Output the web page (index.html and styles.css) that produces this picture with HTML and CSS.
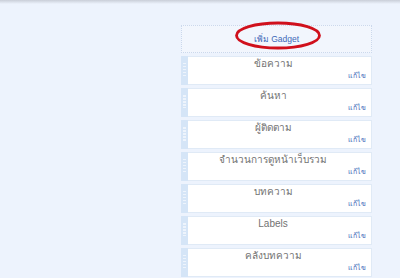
FILE: index.html
```html
<!DOCTYPE html>
<html lang="th">
<head>
  <meta charset="UTF-8" />
  <title>Layout</title>
  <link rel="stylesheet" href="styles.css">
</head>
<body>
  <div class="topbar"></div>

  <div class="column">
    <div class="add-gadget">
      <a href="#">เพิ่ม Gadget</a>
      <svg class="mark" width="92" height="30" viewBox="0 0 92 30">
        <ellipse cx="46" cy="14.5" rx="41.5" ry="12.5" fill="none" stroke="#d0101c" stroke-width="2.8"/>
      </svg>
    </div>

    <div class="widget"><div class="handle"></div><div class="box"><div class="title">ข้อความ</div><a class="edit" href="#">แก้ไข</a></div></div>
    <div class="widget"><div class="handle"></div><div class="box"><div class="title">ค้นหา</div><a class="edit" href="#">แก้ไข</a></div></div>
    <div class="widget"><div class="handle"></div><div class="box"><div class="title">ผู้ติดตาม</div><a class="edit" href="#">แก้ไข</a></div></div>
    <div class="widget"><div class="handle"></div><div class="box"><div class="title">จำนวนการดูหน้าเว็บรวม</div><a class="edit" href="#">แก้ไข</a></div></div>
    <div class="widget"><div class="handle"></div><div class="box"><div class="title">บทความ</div><a class="edit" href="#">แก้ไข</a></div></div>
    <div class="widget"><div class="handle"></div><div class="box"><div class="title">Labels</div><a class="edit" href="#">แก้ไข</a></div></div>
    <div class="widget"><div class="handle"></div><div class="box"><div class="title">คลังบทความ</div><a class="edit" href="#">แก้ไข</a></div></div>
  </div>
</body>
</html>
```

FILE: styles.css
```css
body {
  margin: 0;
  background: #edf3fd;
  font-family: 'Liberation Sans', 'DejaVu Sans', sans-serif;
  overflow: hidden;
}

.topbar {
  height: 4px;
  background: linear-gradient(#c9ced8, #edf3fd);
}

.column {
  margin: 21px 0 0 181px;
  width: 191px;
}

.add-gadget {
  position: relative;
  height: 26px;
  border: 1px dotted #cbd8ec;
  background: #f2f6fd;
  display: flex;
  align-items: center;
  justify-content: center;
}

.add-gadget a {
  font-size: 8.5px;
  color: #3d68b8;
  text-decoration: none;
}

.add-gadget .mark {
  position: absolute;
  left: 50px;
  top: -5px;
}

.widget {
  display: flex;
  height: 29px;
  margin-top: 3px;
}

.handle {
  position: relative;
  width: 7px;
  background: #d5e5f7;
}

.handle::after {
  content: "";
  position: absolute;
  left: 2px;
  top: 7px;
  width: 3px;
  height: 15px;
  background: repeating-linear-gradient(#eef4fc 0 1.5px, transparent 1.5px 3px);
}

.box {
  flex: 1;
  background: #fff;
  border: 1px solid #e0eaf6;
  border-left: none;
  display: flex;
  flex-direction: column;
  padding: 1px 5px 0 0;
}

.title {
  font-size: 10px;
  line-height: 12px;
  color: #727272;
  text-align: center;
  padding-right: 8px;
}

.edit {
  align-self: flex-end;
  font-size: 7px;
  line-height: 11px;
  color: #3d68b8;
  text-decoration: none;
}
```
